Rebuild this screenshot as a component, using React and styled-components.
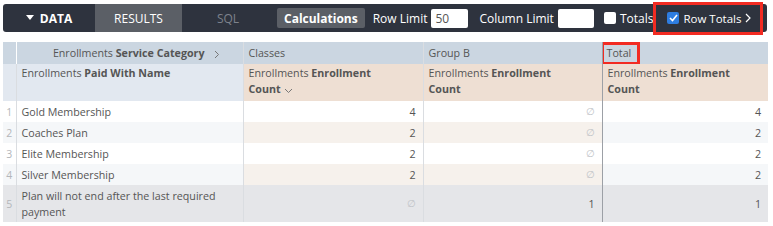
import React from 'react';
import styled, { createGlobalStyle } from 'styled-components';

const Global = createGlobalStyle`
  body {
    margin: 0;
    padding: 4px 6px 0 3px;
    background: #fff;
    font-family: "Open Sans", "Liberation Sans", sans-serif;
    font-size: 11px;
    color: #4d4d4d;
  }
`;

const Toolbar = styled.div`
  display: flex;
  align-items: center;
  height: 28px;
  background: #2e333e;
  border-radius: 3px;
  color: #fff;
  white-space: nowrap;
`;

const Tab = styled.div`
  display: flex;
  align-items: center;
  justify-content: center;
  flex-shrink: 0;
  height: 100%;
  width: ${p => p.$w}px;
  background: ${p => (p.$active ? '#5b5f66' : 'transparent')};
  color: ${p => (p.$dim ? '#7d828c' : '#fff')};
  font-weight: ${p => (p.$bold ? 700 : 400)};
  font-size: 12px;
  gap: 6px;
`;

const CalcButton = styled.div`
  margin-left: 3px;
  height: 20px;
  padding: 0 7px;
  display: flex;
  align-items: center;
  flex-shrink: 0;
  background: #5b5f66;
  border-radius: 2px;
  font-weight: 700;
  font-size: 12px;
`;

const Label = styled.span`
  margin-left: ${p => p.$ml || 0}px;
  font-size: ${p => p.$fs || 12}px;
  flex-shrink: 0;
`;

const Input = styled.div`
  width: ${p => p.$w}px;
  height: 19px;
  margin-left: 4px;
  flex-shrink: 0;
  background: #fff;
  border-radius: 2px;
  color: #555;
  font-size: 12px;
  padding-left: 4px;
  box-sizing: border-box;
  display: flex;
  align-items: center;
`;

const Check = styled.span`
  width: 12px;
  height: 12px;
  flex-shrink: 0;
  margin-left: ${p => p.$ml || 0}px;
  margin-right: 4px;
  border-radius: 2px;
  background: ${p => (p.$on ? '#2e7de1' : '#fff')};
  display: inline-flex;
  align-items: center;
  justify-content: center;
`;

const Highlight = styled.div`
  display: flex;
  align-items: center;
  flex-shrink: 0;
  height: 29px;
  margin-left: 2px;
  padding: 0 9px 0 12px;
  outline: 3px solid #f22b22;
  outline-offset: -1px;
`;

const Table = styled.table`
  margin-top: 10px;
  border-collapse: collapse;
  table-layout: fixed;
  width: 765px;
`;

const Cell = styled.td`
  padding: ${p => (p.$top ? 1 : 0)}px ${p => p.$pr || 7}px 0 5px;
  height: ${p => p.$h || 21}px;
  line-height: 16px;
  vertical-align: ${p => (p.$top ? 'top' : 'middle')};
  text-align: ${p => (p.$right ? 'right' : 'left')};
  background: ${p => p.$bg};
  border-right: 1px solid ${p => (p.$dark ? '#9ca0a6' : '#dadde1')};
  color: #555;
  font-size: 10.7px;
  overflow: hidden;
  &:last-child { border-right: none; }
`;

const NumCell = styled(Cell)`
  padding: 0;
  text-align: center;
  color: #b3b6ba;
  font-size: 10.5px;
  border-right-color: ${p => (p.$plain ? 'transparent' : '#dadde1')};
`;

const TotalMark = styled.span`
  display: inline-block;
  margin-left: -5px;
  padding: 0 7px 0 4px;
  line-height: 19px;
  outline: 3px solid #f22b22;
  outline-offset: -1px;
`;

const Null = styled.span`
  color: #c0c3c7;
  font-size: 9.5px;
`;

const B = styled.b`
  font-weight: 700;
`;

const Caret = () => (
  <svg width="8" height="6" viewBox="0 0 8 6"><path d="M0 0h8L4 5z" fill="#fff" /></svg>
);

const Chevron = ({ down }) => (
  <svg width="9" height="9" viewBox="0 0 9 9" style={{ marginLeft: down ? 3 : 7, verticalAlign: 'middle' }}>
    <path d={down ? 'M1 3l3.5 3.5L8 3' : 'M3 1l3.5 3.5L3 8'} fill="none" stroke="#777" strokeWidth="1" />
  </svg>
);

const Tick = () => (
  <svg width="9" height="8" viewBox="0 0 9 8"><path d="M1 4l2.5 2.5L8 1" fill="none" stroke="#fff" strokeWidth="1.6" /></svg>
);

const HEAD1 = '#cbd6e1';
const DIM = '#e2e8f0';
const MEAS = '#eedfd3';
const WHITE = '#fff';
const ALT = '#f5f7f9';
const ALTM = '#f6f1ec';
const SEL = '#e5e6e9';

const rows = [
  ['Gold Membership', '4', null, '4'],
  ['Coaches Plan', '2', null, '2'],
  ['Elite Membership', '2', null, '2'],
  ['Silver Membership', '2', null, '2'],
];

const Value = ({ v }) => (v == null ? <Null>∅</Null> : v);

export default function App() {
  return (
    <>
      <Global />
      <Toolbar>
        <Tab $w={92} $bold><Caret />DATA</Tab>
        <Tab $w={87} $active>RESULTS</Tab>
        <Tab $w={92} $dim>SQL</Tab>
        <CalcButton>Calculations</CalcButton>
        <Label $ml={8}>Row Limit</Label>
        <Input $w={37}>50</Input>
        <Label $ml={11}>Column Limit</Label>
        <Input $w={36} />
        <Check $ml={10} />
        <Label>Totals</Label>
        <Highlight>
          <Check $on><Tick /></Check>
          <Label $fs={11.5}>Row Totals</Label>
          <svg width="8" height="10" viewBox="0 0 8 10" style={{ marginLeft: 3 }}>
            <path d="M2 1l4 4-4 4" fill="none" stroke="#fff" strokeWidth="1.2" />
          </svg>
        </Highlight>
      </Toolbar>
      <Table>
        <colgroup>
          <col style={{ width: 13 }} />
          <col style={{ width: 227 }} />
          <col style={{ width: 180 }} />
          <col style={{ width: 179 }} />
          <col style={{ width: 166 }} />
        </colgroup>
        <tbody>
          <tr>
            <NumCell $bg={HEAD1} $h={22} $plain />
            <Cell $bg={HEAD1} $h={22} $right $pr={22}>Enrollments <B>Service Category</B><Chevron /></Cell>
            <Cell $bg={HEAD1} $h={22}>Classes</Cell>
            <Cell $bg={HEAD1} $h={22} $dark>Group B</Cell>
            <Cell $bg={HEAD1} $h={22}><TotalMark>Total</TotalMark></Cell>
          </tr>
          <tr>
            <NumCell $bg={DIM} $h={36} />
            <Cell $bg={DIM} $h={36} $top>Enrollments <B>Paid With Name</B></Cell>
            <Cell $bg={MEAS} $h={36} $top $pr={24}>Enrollments <B>Enrollment Count</B><Chevron down /></Cell>
            <Cell $bg={MEAS} $h={36} $top $pr={24} $dark>Enrollments <B>Enrollment Count</B></Cell>
            <Cell $bg={MEAS} $h={36} $top $pr={24}>Enrollments <B>Enrollment Count</B></Cell>
          </tr>
          {rows.map((r, i) => {
            const alt = i % 2 === 1;
            return (
              <tr key={i}>
                <NumCell $bg={alt ? ALT : WHITE}>{i + 1}</NumCell>
                <Cell $bg={alt ? ALT : WHITE}>{r[0]}</Cell>
                <Cell $bg={alt ? ALTM : WHITE} $right><Value v={r[1]} /></Cell>
                <Cell $bg={alt ? ALTM : WHITE} $right $dark><Value v={r[2]} /></Cell>
                <Cell $bg={alt ? ALT : WHITE} $right><Value v={r[3]} /></Cell>
              </tr>
            );
          })}
          <tr>
            <NumCell $bg={SEL} $h={37}>5</NumCell>
            <Cell $bg={SEL} $h={37} $pr={4}>Plan will not end after the last required payment</Cell>
            <Cell $bg={SEL} $h={37} $right><Value v={null} /></Cell>
            <Cell $bg={SEL} $h={37} $right $dark>1</Cell>
            <Cell $bg={SEL} $h={37} $right>1</Cell>
          </tr>
        </tbody>
      </Table>
    </>
  );
}
